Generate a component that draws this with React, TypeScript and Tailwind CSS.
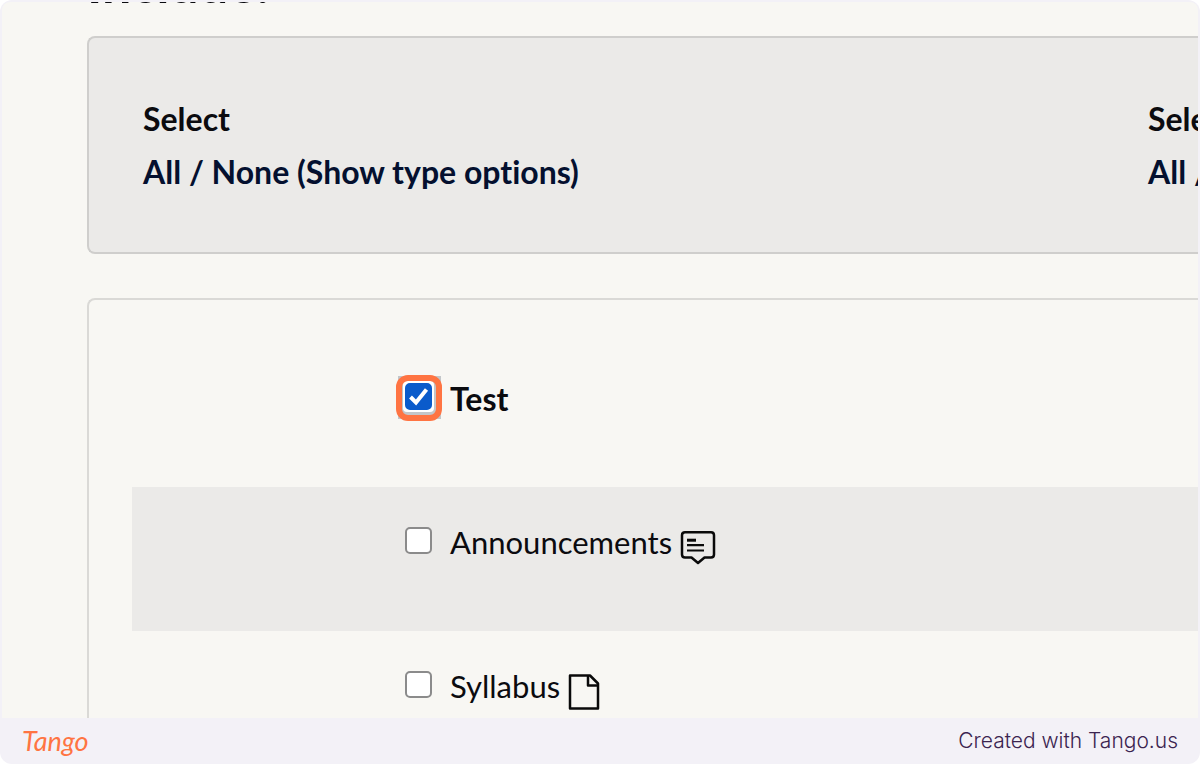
import { useState } from 'react';

const AnnouncementIcon: React.FC = () => (
  <svg
    className="h-9 w-9 shrink-0"
    viewBox="0 0 36 36"
    fill="none"
    stroke="#0a0a0a"
    strokeWidth="2.5"
    strokeLinejoin="round"
    aria-hidden="true">
    <path d="M5 2.2H31Q34 2.2 34 5.2V24.5Q34 27.5 31 27.5H24.5L18 33L11.5 27.5H5Q2 27.5 2 24.5V5.2Q2 2.2 5 2.2Z" />
    <path d="M7 10.2H16" strokeWidth="3" />
    <path d="M7 15.2H24M7 20.5H24" strokeWidth="2.2" />
  </svg>
);

const PageIcon: React.FC = () => (
  <svg
    className="h-9 w-8 shrink-0"
    viewBox="0 0 32 36"
    fill="none"
    stroke="#0a0a0a"
    strokeWidth="2.5"
    strokeLinejoin="round"
    aria-hidden="true">
    <path d="M2 1.5H22L30 9.5V34.5H2Z" />
    <path d="M20 1.5V11.5H30" />
  </svg>
);

const SelectColumn: React.FC = () => (
  <div className="text-[32px] leading-[53px] font-bold whitespace-nowrap">
    <div className="text-[#0b0b0f]">Select</div>
    <div className="text-[#04102f]">
      <a href="#all">All</a> / <a href="#none">None</a> (<a href="#types">Show type options</a>)
    </div>
  </div>
);

interface RowProps {
  id: string;
  label: string;
  defaultChecked?: boolean;
  highlighted?: boolean;
  className?: string;
  icon?: React.ReactNode;
}

const ActivityRow: React.FC<RowProps> = ({
  id,
  label,
  defaultChecked = false,
  highlighted = false,
  className = '',
  icon,
}) => {
  const [checked, setChecked] = useState(defaultChecked);
  return (
    <div className={`flex h-36 shrink-0 items-start pt-[29px] pl-[273px] ${className}`}>
      <div className="relative mt-[11px] size-[27px] shrink-0">
        {highlighted && (
          <>
            <span className="absolute -top-[7px] -left-[7px] size-[43px] bg-[#c3c6c9]" />
            <span className="absolute -top-[2px] -left-[2px] size-[31px] rounded-sm bg-white" />
            <span className="absolute -top-[8px] -left-[9px] size-[46px] rounded-xl border-[6px] border-[#ff7442]" />
          </>
        )}
        <input
          id={id}
          type="checkbox"
          checked={checked}
          onChange={(e) => setChecked(e.target.checked)}
          className="relative block size-[27px] appearance-none rounded-[5px] border-2 border-[#8b8b8b] bg-white checked:border-[#0a5bcb] checked:bg-[#0a5bcb]"
        />
        {checked && (
          <svg
            className="pointer-events-none absolute inset-0"
            viewBox="0 0 27 27"
            fill="none"
            stroke="#fff"
            strokeWidth="4"
            aria-hidden="true">
            <path d="M5.5 14L11 19.5L21.5 6.5" />
          </svg>
        )}
      </div>
      <label
        htmlFor={id}
        className={`ml-[18px] leading-[53px] text-[#0b0b0f] ${highlighted ? 'text-[32px] font-bold' : 'text-[31px]'}`}>
        {label}
      </label>
      <span className="ml-2 pt-[14px]">{icon}</span>
    </div>
  );
};

const App: React.FC = () => {
  return (
    <div className="flex h-screen flex-col overflow-hidden rounded-xl bg-[#f3f1f7] px-0.5 pt-0.5 font-['Lato','Noto_Sans',sans-serif] [font-variant-ligatures:none]">
      <main className="min-h-0 flex-1 overflow-hidden rounded-t-lg bg-[#f8f7f3] pl-[85px]">
        <h2 className="-mt-[43px] text-[52px] leading-[48px] font-bold text-[#0b0b0f]">Include:</h2>

        <section className="mt-[29px] grid grid-cols-[1005px_1fr] overflow-hidden rounded-l-lg border-2 border-r-0 border-[#cfcecc] bg-[#ebeae8] py-[54px] pl-[54px]">
          <SelectColumn />
          <SelectColumn />
        </section>

        <section className="mt-11 rounded-l-lg border-2 border-r-0 border-[#dad9d6] pt-[43px] pl-[43px]">
          <ActivityRow id="test" label="Test" defaultChecked highlighted />
          <ActivityRow
            id="announcements"
            label="Announcements"
            className="bg-[#ebeae8]"
            icon={<AnnouncementIcon />}
          />
          <ActivityRow id="syllabus" label="Syllabus" icon={<PageIcon />} />
        </section>
      </main>

      <footer className="flex h-[46px] shrink-0 items-center justify-between px-5">
        <a href="#tango" className="text-[27px] leading-8 text-[#ff7442] italic">
          Tango
        </a>
        <span className="font-['Inter',sans-serif] text-[21px] font-light text-[#3b2450]">Created with Tango.us</span>
      </footer>
    </div>
  );
};

export default App;
